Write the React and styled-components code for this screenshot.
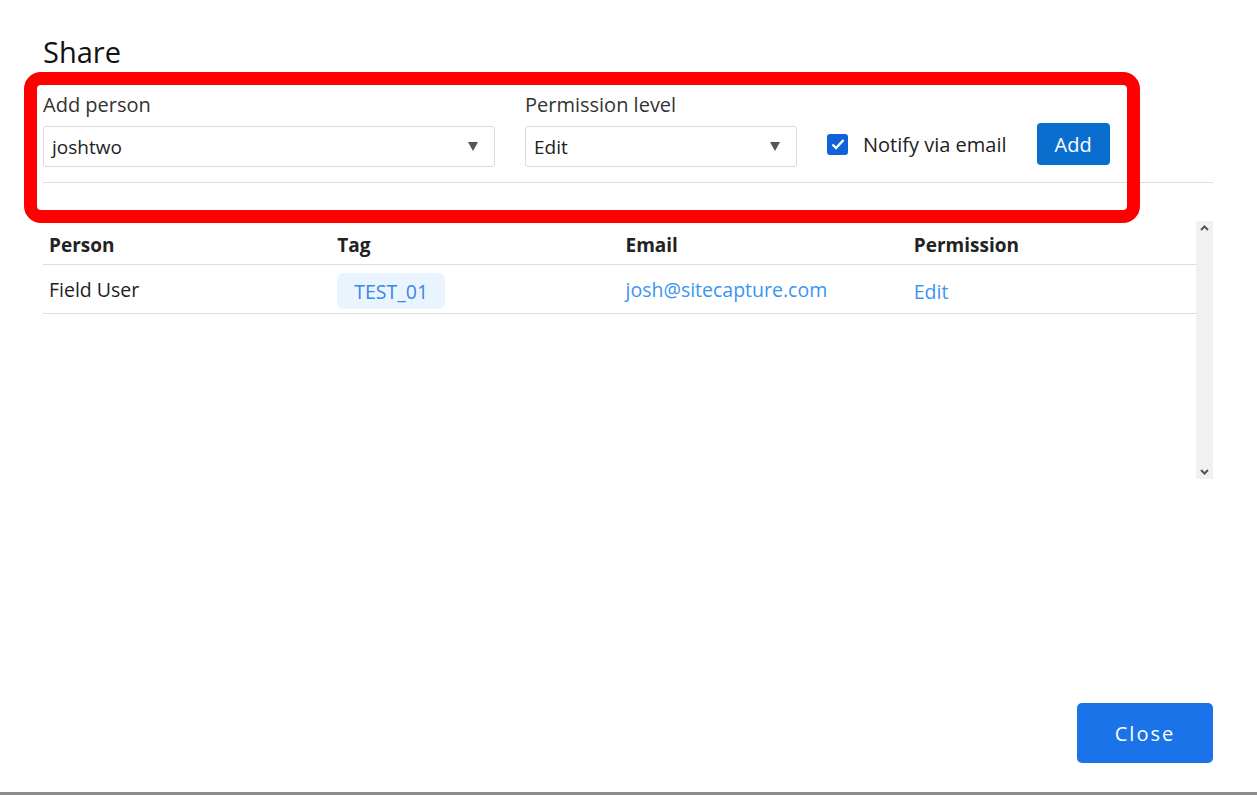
import styled, { createGlobalStyle } from 'styled-components';

const GlobalStyle = createGlobalStyle`
  html, body {
    margin: 0;
    padding: 0;
    background: #ffffff;
  }
  body {
    font-family: "Open Sans", "Noto Sans", sans-serif;
    color: #212529;
  }
  * {
    box-sizing: border-box;
  }
`;

const Page = styled.div`
  position: relative;
  height: 795px;
  display: flex;
  flex-direction: column;
  padding: 0 44px 0 43px;
  overflow: hidden;
`;

const Title = styled.h1`
  margin: 34px 0 0;
  font-size: 29px;
  line-height: 36px;
  font-weight: 400;
  color: #111;
`;

const FormRow = styled.div`
  display: flex;
  align-items: flex-end;
  margin-top: 22px;
`;

const Field = styled.div`
  display: flex;
  flex-direction: column;
  width: ${p => p.width}px;
  margin-right: ${p => p.gap || 0}px;
`;

const Label = styled.label`
  font-size: 20px;
  line-height: 26px;
  color: #333;
  margin-bottom: 8px;
`;

const Select = styled.div`
  height: 41px;
  border: 1px solid #dadada;
  border-radius: 3px;
  display: flex;
  align-items: center;
  justify-content: space-between;
  padding: 0 16px 0 8px;
  font-size: 19px;
  color: #222;
  background: #fff;
`;

const Caret = styled.span`
  width: 0;
  height: 0;
  border-left: 5px solid transparent;
  border-right: 5px solid transparent;
  border-top: 9px solid #555;
`;

const Controls = styled.div`
  display: flex;
  align-items: center;
  margin-bottom: 2px;
  padding-left: 30px;
`;

const CheckBox = styled.span`
  width: 21px;
  height: 21px;
  border-radius: 3px;
  background: #0f62d9;
  display: flex;
  align-items: center;
  justify-content: center;
`;

const CheckText = styled.span`
  font-size: 20px;
  color: #222;
  margin-left: 15px;
`;

const PrimaryButton = styled.button`
  margin-left: 30px;
  height: 42px;
  padding: 0 18px;
  border: none;
  border-radius: 4px;
  background: #0a6ecf;
  color: #fff;
  font-family: inherit;
  font-size: 20px;
`;

const Divider = styled.div`
  margin-top: 15px;
  height: 1px;
  background: #dedede;
`;

const TableArea = styled.div`
  margin-top: 38px;
  height: 258px;
  display: flex;
`;

const Table = styled.div`
  flex: 1;
  display: flex;
  flex-direction: column;
`;

const Row = styled.div`
  display: grid;
  grid-template-columns: repeat(4, 1fr);
  align-items: center;
  height: ${p => p.h}px;
  border-bottom: 1px solid #dedede;
  padding-top: ${p => p.pt || 0}px;
`;

const HeadCell = styled.div`
  padding-left: 6px;
  font-size: 19px;
  font-weight: 700;
  color: #222;
`;

const Cell = styled.div`
  padding-left: 6px;
  font-size: 19.5px;
  color: ${p => (p.link ? '#3b95f0' : '#222')};
  margin-top: ${p => p.shift || 0}px;
`;

const Tag = styled.span`
  display: inline-flex;
  align-items: center;
  height: 36px;
  padding: 0 17px;
  margin-top: 4px;
  border-radius: 6px;
  background: #eaf4ff;
  color: #3a86e3;
  font-size: 19.5px;
`;

const ScrollTrack = styled.div`
  width: 17px;
  background: #f1f1f1;
  display: flex;
  flex-direction: column;
  justify-content: space-between;
  align-items: center;
  padding: 4px 0;
`;

const Footer = styled.div`
  margin-top: auto;
  display: flex;
  justify-content: flex-end;
  padding-bottom: 32px;
`;

const CloseButton = styled.button`
  width: 136px;
  height: 60px;
  border: none;
  border-radius: 5px;
  background: #1a73e8;
  color: #fff;
  font-family: inherit;
  font-size: 20px;
  letter-spacing: 2px;
`;

const BottomEdge = styled.div`
  position: absolute;
  left: 0;
  right: 0;
  bottom: 0;
  height: 3px;
  background: #8c8c8c;
`;

const Highlight = styled.div`
  position: absolute;
  left: 24px;
  top: 72px;
  width: 1116px;
  height: 151px;
  border: 13px solid #ff0000;
  border-radius: 17px;
  pointer-events: none;
`;

const Chevron = ({ up }) => (
  <svg width="9" height="6" viewBox="0 0 9 6">
    <path
      d={up ? 'M1 5 L4.5 1.5 L8 5' : 'M1 1 L4.5 4.5 L8 1'}
      fill="none"
      stroke="#555"
      strokeWidth="2"
    />
  </svg>
);

export default function App() {
  return (
    <>
      <GlobalStyle />
      <Page>
        <Title>Share</Title>
        <FormRow>
          <Field width={452} gap={30}>
            <Label>Add person</Label>
            <Select>
              joshtwo
              <Caret />
            </Select>
          </Field>
          <Field width={272}>
            <Label>Permission level</Label>
            <Select>
              Edit
              <Caret />
            </Select>
          </Field>
          <Controls>
            <CheckBox>
              <svg width="14" height="12" viewBox="0 0 14 12">
                <path d="M1.5 6.5 L5 10 L12.5 2" fill="none" stroke="#fff" strokeWidth="2.4" />
              </svg>
            </CheckBox>
            <CheckText>Notify via email</CheckText>
            <PrimaryButton>Add</PrimaryButton>
          </Controls>
        </FormRow>
        <Divider />
        <TableArea>
          <Table>
            <Row h={44} pt={5}>
              <HeadCell>Person</HeadCell>
              <HeadCell>Tag</HeadCell>
              <HeadCell>Email</HeadCell>
              <HeadCell>Permission</HeadCell>
            </Row>
            <Row h={49}>
              <Cell>Field User</Cell>
              <Cell><Tag>TEST_01</Tag></Cell>
              <Cell link>josh@sitecapture.com</Cell>
              <Cell link shift={4}>Edit</Cell>
            </Row>
          </Table>
          <ScrollTrack>
            <Chevron up />
            <Chevron />
          </ScrollTrack>
        </TableArea>
        <Footer>
          <CloseButton>Close</CloseButton>
        </Footer>
        <Highlight />
        <BottomEdge />
      </Page>
    </>
  );
}
